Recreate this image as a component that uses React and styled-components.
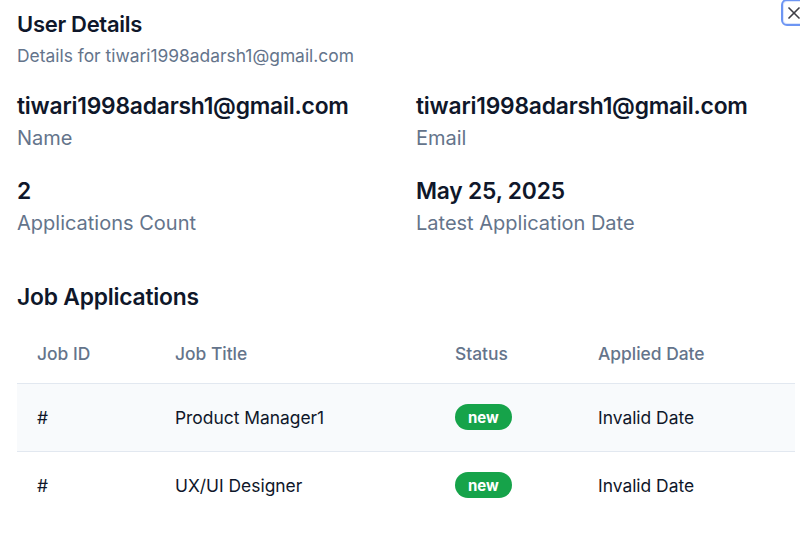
import React from 'react'
import styled, { createGlobalStyle } from 'styled-components'

const GlobalStyle = createGlobalStyle`
  html, body {
    margin: 0;
    padding: 0;
    background: #ffffff;
    overflow: hidden;
  }
  body {
    font-family: Inter, "Noto Sans", "Liberation Sans", sans-serif;
    color: #0f172a;
  }
`

const Dialog = styled.div`
  position: relative;
  width: 800px;
  height: 538px;
  box-sizing: border-box;
  padding: 10px 5px 0 17px;
  overflow: hidden;
`

const CloseButton = styled.button`
  position: absolute;
  top: -1px;
  left: 781px;
  width: 30px;
  height: 27px;
  padding: 0 0 0 1px;
  border: 2px solid #6d95f3;
  border-radius: 6px;
  background: #ffffff;
  box-shadow: inset 0 0 0 1px #dbe6fd;
  display: flex;
  align-items: center;
  justify-content: flex-start;
  color: #3f3f46;
`

const Title = styled.h2`
  margin: 0;
  font-size: 22px;
  line-height: 28px;
  font-weight: 600;
  letter-spacing: -0.3px;
`

const Subtitle = styled.p`
  margin: 6px 0 0;
  font-size: 17.4px;
  line-height: 24px;
  color: #64748b;
`

const InfoGrid = styled.div`
  display: grid;
  grid-template-columns: 399px 1fr;
  row-gap: 24px;
  margin-top: 23px;
`

const InfoItem = styled.div`
  display: flex;
  flex-direction: column;
  gap: 3px;
`

const Value = styled.div`
  font-size: 22.8px;
  line-height: 30px;
  font-weight: 600;
  letter-spacing: -0.2px;
`

const Label = styled.div`
  font-size: 20px;
  line-height: 28px;
  color: #64748b;
`

const SectionTitle = styled.h3`
  margin: 46px 0 0;
  font-size: 22.8px;
  line-height: 28px;
  font-weight: 600;
  letter-spacing: -0.2px;
`

const Table = styled.table`
  margin-top: 13px;
  width: 778px;
  border-collapse: collapse;
  table-layout: fixed;
`

const Th = styled.th`
  box-sizing: border-box;
  height: 59px;
  padding: 0 0 0 20px;
  text-align: left;
  font-size: 17.4px;
  font-weight: 500;
  color: #64748b;
  border-bottom: 1px solid #e2e8f0;
  width: ${p => p.w}px;
`

const Row = styled.tr`
  background: ${p => (p.shaded ? '#f8fafc' : '#ffffff')};
  border-bottom: ${p => (p.last ? 'none' : '1px solid #e2e8f0')};
`

const Td = styled.td`
  height: 67px;
  padding: 0 0 0 20px;
  font-size: 17.4px;
  color: #0f172a;
`

const Badge = styled.span`
  display: inline-flex;
  align-items: center;
  justify-content: center;
  height: 26px;
  padding: 0 13px;
  border-radius: 999px;
  background: #16a34a;
  color: #ffffff;
  font-size: 15px;
  font-weight: 700;
`

const info = [
  { value: 'tiwari1998adarsh1@gmail.com', label: 'Name' },
  { value: 'tiwari1998adarsh1@gmail.com', label: 'Email' },
  { value: '2', label: 'Applications Count' },
  { value: 'May 25, 2025', label: 'Latest Application Date' },
]

const applications = [
  { id: '#', title: 'Product Manager1', status: 'new', date: 'Invalid Date' },
  { id: '#', title: 'UX/UI Designer', status: 'new', date: 'Invalid Date' },
]

export default function App() {
  return (
    <>
      <GlobalStyle />
      <Dialog>
        <CloseButton aria-label="Close">
          <svg width="20" height="20" viewBox="0 0 24 24" fill="none" stroke="currentColor" strokeWidth="2" strokeLinecap="round" strokeLinejoin="round">
            <path d="M18 6 6 18" />
            <path d="m6 6 12 12" />
          </svg>
        </CloseButton>
        <Title>User Details</Title>
        <Subtitle>Details for tiwari1998adarsh1@gmail.com</Subtitle>
        <InfoGrid>
          {info.map((item, i) => (
            <InfoItem key={i}>
              <Value>{item.value}</Value>
              <Label>{item.label}</Label>
            </InfoItem>
          ))}
        </InfoGrid>
        <SectionTitle>Job Applications</SectionTitle>
        <Table>
          <thead>
            <tr>
              <Th w={138}>Job ID</Th>
              <Th w={280}>Job Title</Th>
              <Th w={143}>Status</Th>
              <Th w={217}>Applied Date</Th>
            </tr>
          </thead>
          <tbody>
            {applications.map((app, i) => (
              <Row key={i} shaded={i === 0} last={i === applications.length - 1}>
                <Td>{app.id}</Td>
                <Td>{app.title}</Td>
                <Td>
                  <Badge>{app.status}</Badge>
                </Td>
                <Td>{app.date}</Td>
              </Row>
            ))}
          </tbody>
        </Table>
      </Dialog>
    </>
  )
}
